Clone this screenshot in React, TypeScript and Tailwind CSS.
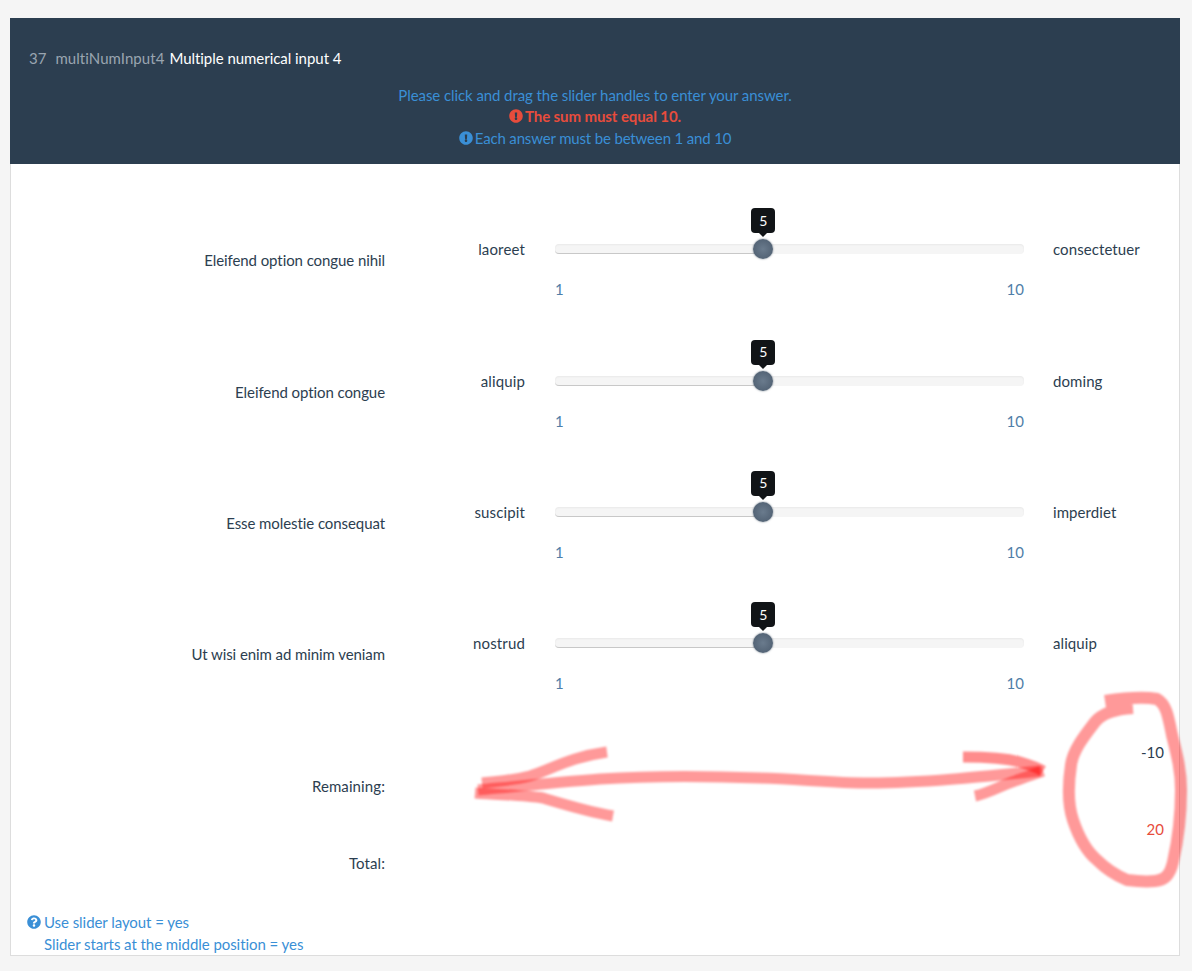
import React from "react";
import { FaExclamationCircle, FaQuestionCircle } from "react-icons/fa";

const rows = [
  { label: "Eleifend option congue nihil", left: "laoreet", right: "consectetuer" },
  { label: "Eleifend option congue", left: "aliquip", right: "doming" },
  { label: "Esse molestie consequat", left: "suscipit", right: "imperdiet" },
  { label: "Ut wisi enim ad minim veniam", left: "nostrud", right: "aliquip" },
];

function Row({ label, left, right }: { label: string; left: string; right: string }) {
  return (
    <div className="flex h-[131.33px]">
      <div className="w-[374px] shrink-0 pt-[85px] text-right leading-[21px] tracking-[-0.08px]">{label}</div>
      <div className="w-[140px] shrink-0 pt-[74px] text-right leading-[21px] tracking-[0.14px]">{left}</div>
      <div className="ml-[30px] w-[469px] shrink-0 pt-[79px]">
        <div className="relative h-[10px] rounded-[4px] bg-[#f5f5f5] shadow-[inset_0_1px_2px_rgba(0,0,0,0.05)]">
          <div className="absolute inset-y-0 left-0 w-[44.4%] rounded-l-[4px] border-b border-[#c8c8c8]" />
          <div className="absolute left-[44.4%] top-[-5px] h-5 w-5 -translate-x-1/2 rounded-full bg-[radial-gradient(circle,#6a7b8d_0%,#4a5a6c_100%)] shadow-[0_0_2px_rgba(44,62,80,0.7)]" />
          <div className="absolute left-[44.4%] top-[-36px] flex h-[25px] w-6 -translate-x-1/2 items-center justify-center rounded-[4px] bg-[#111417] text-sm text-white">
            5
            <div className="absolute bottom-[-4px] left-1/2 -ml-[5px] h-0 w-0 border-x-[5px] border-t-[5px] border-x-transparent border-t-[#111417]" />
          </div>
        </div>
        <div className="mt-[25px] flex justify-between leading-[21px] text-[#4f7ea8]">
          <span>1</span>
          <span>10</span>
        </div>
      </div>
      <div className="ml-[29px] pt-[74px] leading-[21px] tracking-[0.08px]">{right}</div>
    </div>
  );
}

export default function App() {
  return (
    <div className="relative h-[971px] overflow-hidden bg-[#f5f5f5] pl-[10px] pr-[12px] pt-[18px] font-['Lato','Liberation_Sans',sans-serif] text-[15px] text-[#2c3e50]">
      <div className="flex h-[146px] flex-col bg-[#2c3e50] px-[19px]">
        <div className="pt-[30px] leading-[21px]">
          <span className="text-[#9aa5b0]">37</span>
          <span className="ml-[9px] tracking-[0.05px] text-[#9aa5b0]">multiNumInput4</span>
          <span className="ml-[5px] tracking-[-0.04px] text-white">Multiple numerical input 4</span>
        </div>
        <div className="mt-[16px] text-center leading-[21px] text-[#3a8fd6]">
          <div className="tracking-[-0.08px]">Please click and drag the slider handles to enter your answer.</div>
          <div className="font-bold tracking-[-0.09px] text-[#e74c3c]">
            <FaExclamationCircle className="mr-[2px] inline-block h-[14px] w-[14px] align-[-1px]" />
            The sum must equal 10.
          </div>
          <div className="mt-px tracking-[-0.16px]">
            <FaExclamationCircle className="mr-[2px] inline-block h-[14px] w-[14px] align-[-1px]" />
            Each answer must be between 1 and 10
          </div>
        </div>
      </div>

      <div className="h-[792px] border-x border-b border-[#dddddd] bg-white">
        <div className="h-[1.3px]" />
        {rows.map((r) => (
          <Row key={r.label} {...r} />
        ))}
        <div className="flex h-[77px]">
          <div className="w-[374px] shrink-0 pt-[85.5px] text-right leading-[21px] tracking-[0.1px]">Remaining:</div>
          <div className="flex-1 pr-[15px] pt-[51.5px] text-right leading-[21px]">-10</div>
        </div>
        <div className="flex h-[129.7px]">
          <div className="w-[374px] shrink-0 pt-[85.5px] text-right leading-[21px] tracking-[0.1px]">Total:</div>
          <div className="flex-1 pr-[15px] pt-[51.5px] text-right leading-[21px] text-[#e74c3c]">20</div>
        </div>
        <div className="px-4 pt-[14px] leading-[22px] tracking-[-0.06px] text-[#3a8fd6]">
          <div>
            <FaQuestionCircle className="mr-[3px] inline-block h-[14px] w-[14px] align-[-1px]" />
            Use slider layout = yes
          </div>
          <div className="pl-[17px]">Slider starts at the middle position = yes</div>
        </div>
      </div>

      <svg
        className="pointer-events-none absolute left-0 top-0 blur-[0.8px]"
        width="1192"
        height="971"
        fill="none"
        stroke="#ff0000"
        strokeWidth="11"
      >
        <path opacity="0.4" d="M478 790 C520 786 560 782 600 779 C660 775 710 776 760 778 C800 779 830 783 870 783 C920 783 980 777 1040 771" />
        <path opacity="0.4" d="M482 783 C500 781 515 780 530 776 C550 770 570 757 607 752" />
        <path opacity="0.4" d="M475 793 C500 795 525 795 543 798 C560 803 585 811 613 816" />
        <path opacity="0.45" d="M963 757 C985 757 1005 758 1020 762 C1030 765 1038 768 1043 771" />
        <path opacity="0.4" d="M975 796 C990 793 1002 785 1015 781 C1025 777 1035 774 1043 771" />
        <path
          opacity="0.4"
          strokeWidth="12"
          d="M1105 701 C1125 698 1145 697 1157 699 C1166 704 1168 715 1172 735 C1177 755 1181 770 1181 790 C1181 815 1178 840 1173 862 C1170 875 1165 880 1155 881 C1145 882 1135 881 1127 880 C1115 875 1105 868 1097 860 C1085 850 1078 835 1073 820 C1068 805 1068 785 1071 765 C1073 750 1085 735 1095 722 C1103 712 1118 709 1133 708"
        />
      </svg>
    </div>
  );
}
